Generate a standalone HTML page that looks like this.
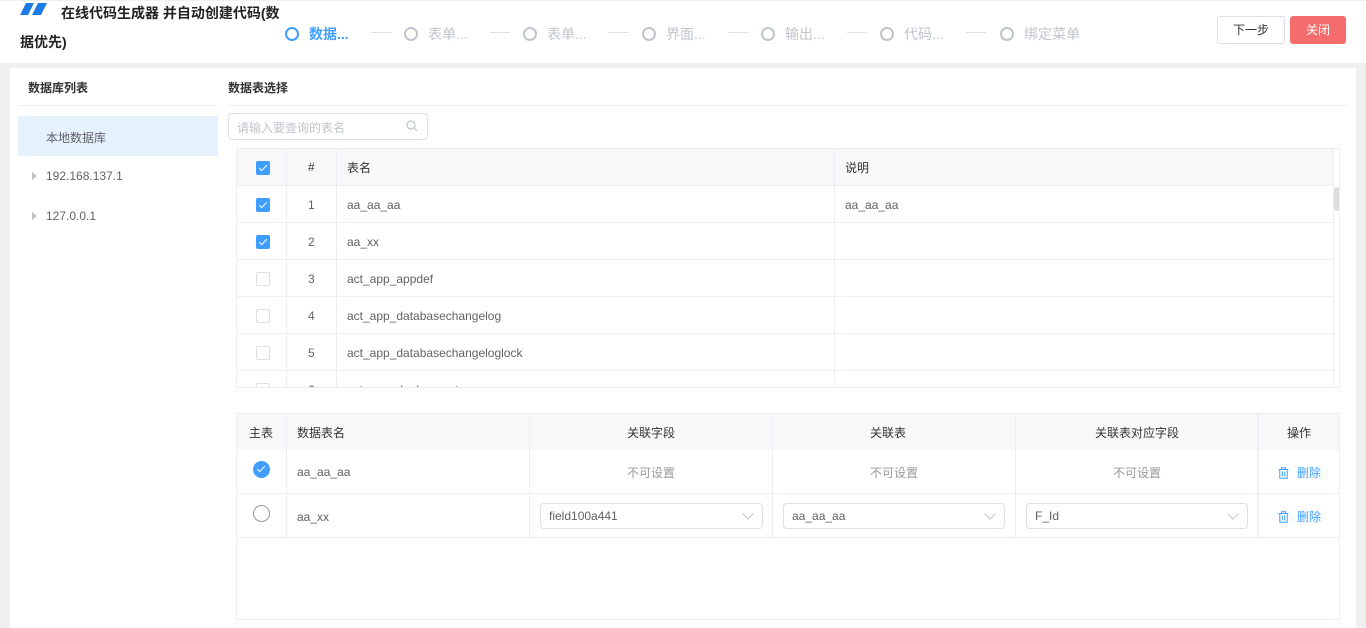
<!DOCTYPE html>
<html><head><meta charset="utf-8"><style>
*{box-sizing:border-box;margin:0;padding:0}
body{width:1366px;height:623px;background:#f0f0f0;font-family:"Liberation Sans","Noto Sans CJK SC",sans-serif;font-size:12px;color:#606266;position:relative;overflow:hidden}
.a{position:absolute}
.hdr{left:0;top:1px;width:1366px;height:62px;background:#fff}
.panel{left:10px;top:68px;width:1346px;height:560px;background:#fff}
.step{top:24px;font-size:14px;color:#c0c4cc;white-space:nowrap}
.circ{display:inline-block;width:14px;height:14px;border:2px solid #c0c4cc;border-radius:50%;vertical-align:-2px;margin-right:10px}
.dash{top:32px;width:20px;height:1px;background:#dcdfe6}
.cb{width:14px;height:14px;border:1px solid #dcdfe6;border-radius:2px;background:#fff}
.cb.on{background:#409eff;border-color:#409eff}
.cb.on:after{content:"";position:absolute;left:4px;top:1px;width:3px;height:7px;border:solid #fff;border-width:0 1px 1px 0;transform:rotate(45deg)}
.hl{height:1px;background:#ebeef5}
.vl{width:1px;background:#ebeef5}
.t{white-space:nowrap}
.sel{height:26px;border:1px solid #dcdfe6;border-radius:4px;padding:0 8px;line-height:24px;color:#606266}
.sel:after{content:"";position:absolute;right:10px;top:6px;width:7px;height:7px;border:solid #c0c4cc;border-width:0 1px 1px 0;transform:rotate(45deg)}
.del{color:#409eff;font-size:12px}
.del svg{vertical-align:-2px;margin-right:8px}
</style></head><body>
<div class="a hdr"></div>
<svg class="a" style="left:20px;top:3px" width="28" height="12"><path d="M6 0H14L8 12H0Z M18 0H27L21 12H12Z" fill="#1e7be6"/></svg>
<div class="a t" style="left:61px;top:3px;font-size:14px;font-weight:bold;color:#222">在线代码生成器 并自动创建代码(数</div>
<div class="a t" style="left:20px;top:32px;font-size:14px;font-weight:bold;color:#222">据优先)</div>
<div class="a step" style="left:285px;color:#409eff"><span class="circ" style="border-color:#409eff"></span><b>数据...</b></div>
<div class="a dash" style="left:371px"></div>
<div class="a step" style="left:404px"><span class="circ"></span>表单...</div>
<div class="a dash" style="left:490px"></div>
<div class="a step" style="left:523px"><span class="circ"></span>表单...</div>
<div class="a dash" style="left:609px"></div>
<div class="a step" style="left:642px"><span class="circ"></span>界面...</div>
<div class="a dash" style="left:728px"></div>
<div class="a step" style="left:761px"><span class="circ"></span>输出...</div>
<div class="a dash" style="left:847px"></div>
<div class="a step" style="left:880px"><span class="circ"></span>代码...</div>
<div class="a dash" style="left:966px"></div>
<div class="a step" style="left:1000px"><span class="circ"></span>绑定菜单</div>
<div class="a" style="left:1217px;top:16px;width:68px;height:28px;border:1px solid #dcdfe6;border-radius:3px;text-align:center;line-height:26px;color:#333">下一步</div>
<div class="a" style="left:1290px;top:16px;width:56px;height:28px;background:#f56c6c;border-radius:3px;text-align:center;line-height:28px;color:#fff">关闭</div>

<div class="a panel"></div>
<div class="a t" style="left:28px;top:79px;font-weight:bold;color:#303133">数据库列表</div>
<div class="a hl" style="left:18px;top:105px;width:200px"></div>
<div class="a" style="left:18px;top:116px;width:200px;height:40px;background:#e6f1fe"></div>
<div class="a t" style="left:46px;top:129px">本地数据库</div>
<div class="a" style="left:32px;top:172px;border-left:5px solid #c0c4cc;border-top:4px solid transparent;border-bottom:4px solid transparent"></div>
<div class="a t" style="left:46px;top:169px">192.168.137.1</div>
<div class="a" style="left:32px;top:212px;border-left:5px solid #c0c4cc;border-top:4px solid transparent;border-bottom:4px solid transparent"></div>
<div class="a t" style="left:46px;top:209px">127.0.0.1</div>

<div class="a t" style="left:228px;top:79px;font-weight:bold;color:#303133">数据表选择</div>
<div class="a hl" style="left:228px;top:105px;width:1120px"></div>
<div class="a" style="left:228px;top:113px;width:200px;height:27px;border:1px solid #dcdfe6;border-radius:4px"></div>
<div class="a t" style="left:237px;top:119px;color:#c0c4cc">请输入要查询的表名</div>
<svg class="a" style="left:406px;top:120px" width="12" height="12"><circle cx="5" cy="5" r="4" fill="none" stroke="#c0c4cc" stroke-width="1.2"/><path d="M8 8L11 11" stroke="#c0c4cc" stroke-width="1.2"/></svg>

<!-- upper table -->
<div class="a" style="left:236px;top:148px;width:1104px;height:240px;border:1px solid #ebeef5;overflow:hidden">
<div class="a" style="left:0;top:0;width:1096px;height:37px;background:#f8f8f9"></div>
<div class="a" style="left:1096px;top:0;width:8px;height:240px;background:#fff;border-left:1px solid #ebeef5"></div>
<div class="a" style="left:1097px;top:38px;width:6px;height:24px;background:#ddd;border-radius:3px"></div>
<div class="a vl" style="left:49px;top:0;height:240px"></div>
<div class="a vl" style="left:99px;top:0;height:240px"></div>
<div class="a vl" style="left:597px;top:0;height:240px"></div>
<div class="a hl" style="left:0;top:36px;width:1096px"></div>
<div class="a hl" style="left:0;top:73px;width:1096px"></div>
<div class="a hl" style="left:0;top:110px;width:1096px"></div>
<div class="a hl" style="left:0;top:147px;width:1096px"></div>
<div class="a hl" style="left:0;top:184px;width:1096px"></div>
<div class="a hl" style="left:0;top:221px;width:1096px"></div>
<div class="a cb on" style="left:19px;top:12px"></div>
<div class="a cb on" style="left:19px;top:49px"></div>
<div class="a cb on" style="left:19px;top:86px"></div>
<div class="a cb" style="left:19px;top:123px"></div>
<div class="a cb" style="left:19px;top:160px"></div>
<div class="a cb" style="left:19px;top:197px"></div>
<div class="a cb" style="left:19px;top:234px"></div>
<div class="a t" style="left:71px;top:11px;color:#333">#</div>
<div class="a t" style="left:110px;top:10px;color:#333">表名</div>
<div class="a t" style="left:608px;top:10px;color:#333">说明</div>
<div class="a t" style="left:71px;top:49px">1</div><div class="a t" style="left:110px;top:49px">aa_aa_aa</div><div class="a t" style="left:608px;top:49px">aa_aa_aa</div>
<div class="a t" style="left:71px;top:86px">2</div><div class="a t" style="left:110px;top:86px">aa_xx</div>
<div class="a t" style="left:71px;top:123px">3</div><div class="a t" style="left:110px;top:123px">act_app_appdef</div>
<div class="a t" style="left:71px;top:160px">4</div><div class="a t" style="left:110px;top:160px">act_app_databasechangelog</div>
<div class="a t" style="left:71px;top:197px">5</div><div class="a t" style="left:110px;top:197px">act_app_databasechangeloglock</div>
<div class="a t" style="left:71px;top:234px">6</div><div class="a t" style="left:110px;top:234px">act_app_deployment</div>
</div>

<!-- lower table -->
<div class="a" style="left:236px;top:413px;width:1104px;height:207px;border:1px solid #ebeef5">
<div class="a" style="left:0;top:0;width:1102px;height:36px;background:#f8f8f9"></div>
<div class="a vl" style="left:49px;top:0;height:124px"></div>
<div class="a vl" style="left:292px;top:0;height:124px"></div>
<div class="a vl" style="left:535px;top:0;height:124px"></div>
<div class="a vl" style="left:778px;top:0;height:124px"></div>
<div class="a" style="left:1020px;top:0;width:2px;height:124px;background:#ebeef5"></div>
<div class="a hl" style="left:0;top:79px;width:1102px"></div>
<div class="a hl" style="left:0;top:123px;width:1102px"></div>
<div class="a t" style="left:12px;top:10px;color:#333">主表</div>
<div class="a t" style="left:60px;top:10px;color:#333">数据表名</div>
<div class="a t" style="left:390px;top:10px;color:#333">关联字段</div>
<div class="a t" style="left:633px;top:10px;color:#333">关联表</div>
<div class="a t" style="left:858px;top:10px;color:#333">关联表对应字段</div>
<div class="a t" style="left:1050px;top:10px;color:#333">操作</div>
<div class="a" style="left:16px;top:47px;width:17px;height:17px;border-radius:50%;background:#409eff"></div>
<div class="a" style="left:22px;top:50px;width:4px;height:8px;border:solid #fff;border-width:0 1.5px 1.5px 0;transform:rotate(45deg)"></div>
<div class="a" style="left:16px;top:91px;width:17px;height:17px;border-radius:50%;border:1px solid #999"></div>
<div class="a t" style="left:60px;top:51px">aa_aa_aa</div>
<div class="a t" style="left:60px;top:96px">aa_xx</div>
<div class="a t" style="left:390px;top:50px;color:#999">不可设置</div>
<div class="a t" style="left:633px;top:50px;color:#999">不可设置</div>
<div class="a t" style="left:876px;top:50px;color:#999">不可设置</div>
<div class="a sel" style="left:303px;top:89px;width:223px">field100a441</div>
<div class="a sel" style="left:546px;top:89px;width:222px">aa_aa_aa</div>
<div class="a sel" style="left:789px;top:89px;width:222px">F_Id</div>
<div class="a t del" style="left:1041px;top:50px"><svg width="11" height="12" viewBox="0 0 11 12"><path d="M0.5 2.5H10.5M3.5 2.5V0.8H7.5V2.5M1.8 2.5V11.2H9.2V2.5M4.3 4.5V9.5M6.7 4.5V9.5" fill="none" stroke="#409eff" stroke-width="1"/></svg>删除</div>
<div class="a t del" style="left:1041px;top:94px"><svg width="11" height="12" viewBox="0 0 11 12"><path d="M0.5 2.5H10.5M3.5 2.5V0.8H7.5V2.5M1.8 2.5V11.2H9.2V2.5M4.3 4.5V9.5M6.7 4.5V9.5" fill="none" stroke="#409eff" stroke-width="1"/></svg>删除</div>
</div>
</body></html>
